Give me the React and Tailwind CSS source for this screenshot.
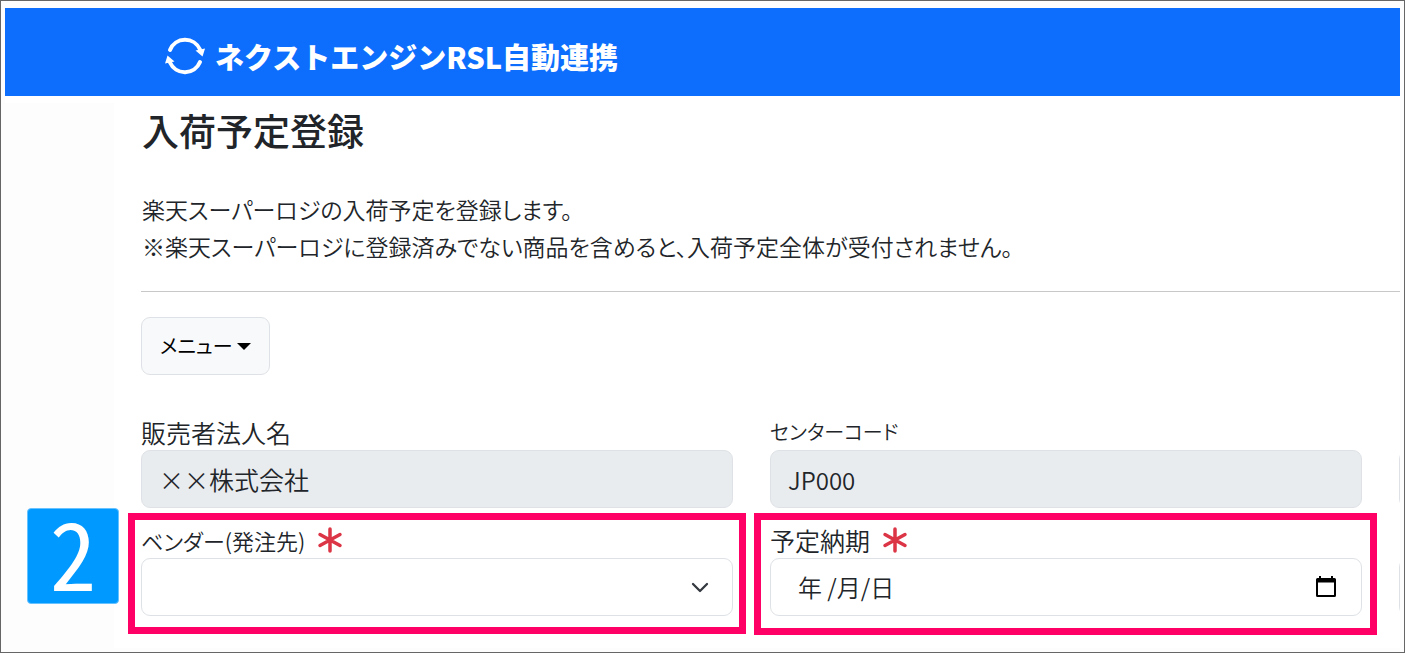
import React, { useState } from 'react';

function SyncLogo() {
  return (
    <svg viewBox="0 0 40 40" className="h-10 w-10 shrink-0" fill="none" aria-hidden="true">
      <path d="M5 14A16.300 16.300 0 0 1 35 13.500" stroke="#fff" strokeWidth="4" strokeLinecap="round" />
      <path d="M35 26A16.300 16.300 0 0 1 5 26.500" stroke="#fff" strokeWidth="4" strokeLinecap="round" />
      <path d="M30.500 14.500 40 12.500 37.500 20.500Z" fill="#fff" />
      <path d="M9.500 25.500 0 27.500 2.500 19.500Z" fill="#fff" />
    </svg>
  );
}

function Asterisk() {
  return (
    <svg viewBox="0 0 26 26" className="h-[26px] w-[26px]" aria-label="必須" role="img">
      <path d="M13 2V24M3 7.500 23 18.500M23 7.500 3 18.500" stroke="#dc3545" strokeWidth="3.500" strokeLinecap="round" />
    </svg>
  );
}

function CalendarIcon() {
  return (
    <svg viewBox="0 0 20 22" className="h-[22px] w-5" aria-hidden="true">
      <path
        fillRule="evenodd"
        fill="#000"
        d="M3 0h2v2h10V0h2v2h1.500a1.500 1.500 0 0 1 1.500 1.500v16a1.500 1.500 0 0 1-1.500 1.500h-17A1.500 1.500 0 0 1 0 19.500v-16A1.500 1.500 0 0 1 1.500 2H3zM2 6.500V19h16V6.500z"
      />
    </svg>
  );
}

function Label({ htmlFor, required, className = 'text-[25px]', children }) {
  return (
    <label htmlFor={htmlFor} className={`flex h-9 items-center gap-3 leading-8 whitespace-nowrap ${className}`}>
      {children}
      {required && <Asterisk />}
    </label>
  );
}

// Left edge of the next column, cut off by the viewport
function NextColumn() {
  return (
    <div className="overflow-hidden pt-9">
      <div className="h-[58px] w-16 rounded-[9px] border border-[#dee2e6]"></div>
    </div>
  );
}

function App() {
  const [vendor, setVendor] = useState('');
  const [dueDate, setDueDate] = useState('年 /月/日');

  return (
    <div className="flex min-h-screen flex-col overflow-hidden border border-[#666666] bg-[#fdfdfd] px-1 pt-[7px] pb-1 font-['Noto_Sans_CJK_JP',sans-serif] text-2xl font-[350] text-[#212529] [font-feature-settings:'palt']">
      {/* Header */}
      <header className="flex h-[88px] items-center bg-[#0d6efd] pt-2 pl-40">
        <a href="#" className="flex items-center gap-[10px] text-[29px] leading-9 font-black text-white [font-feature-settings:normal]">
          <SyncLogo />
          <span>ネクストエンジンRSL自動連携</span>
        </a>
      </header>

      <div className="flex flex-1 bg-white">
        <aside className="mt-[7px] w-[109px] shrink-0 bg-[#fdfdfd]"></aside>

        <main className="min-w-0 flex-1 pt-3 pl-7">
          <h1 className="text-[37px] leading-[45px] font-medium">入荷予定登録</h1>

          <p className="mt-[38px] text-[23px] leading-[37px]">
            楽天スーパーロジの入荷予定を登録します。
            <br />
            ※楽天スーパーロジに登録済みでない商品を含めると、入荷予定全体が受付されません。
          </p>

          <hr className="mt-[26px] -ml-px border-[#c7c8c9]" />

          <button
            type="button"
            className="mt-[25px] -ml-px flex h-[58px] items-center gap-1 rounded-[9px] border border-[#dee2e6] bg-[#f8f9fa] px-[18px] text-[20px] font-normal text-black"
          >
            メニュー
            <svg viewBox="0 0 14 7" className="h-[7px] w-[14px]" aria-hidden="true">
              <path d="M0 0h14L7 7z" />
            </svg>
          </button>

          <form className="mt-[39px] -ml-px grid grid-cols-[minmax(0,1fr)_minmax(0,1fr)_1px] gap-x-[37px] gap-y-[14px]">
            <div>
              <Label htmlFor="company">販売者法人名</Label>
              <input
                id="company"
                readOnly
                value="××株式会社"
                className="h-[58px] w-full rounded-[9px] border border-[#dee2e6] bg-[#e9ecef] px-[17px] text-[25px] outline-none"
              />
            </div>
            <div>
              <Label htmlFor="center" className="text-[20px]">センターコード</Label>
              <input
                id="center"
                readOnly
                value="JP000"
                className="h-[58px] w-full rounded-[9px] border border-[#dee2e6] bg-[#e9ecef] px-[17px] outline-none"
              />
            </div>
            <NextColumn />

            <div className="relative">
              <Label htmlFor="vendor" required className="text-[22px]">ベンダー(発注先)</Label>
              <div className="relative">
                <select
                  id="vendor"
                  value={vendor}
                  onChange={(e) => setVendor(e.target.value)}
                  className="block h-[58px] w-full appearance-none rounded-[9px] border border-[#dee2e6] bg-white px-[17px] outline-none"
                >
                  <option value=""></option>
                </select>
                <svg viewBox="0 0 18 12" className="pointer-events-none absolute top-6 right-6 h-3 w-[18px]" fill="none" aria-hidden="true">
                  <path d="M2 2l7 7 7-7" stroke="#343a40" strokeWidth="2.300" strokeLinecap="round" strokeLinejoin="round" />
                </svg>
              </div>
              <div className="pointer-events-none absolute -inset-x-[13px] -top-[9px] -bottom-[18px] border-[7px] border-[#ff0066]"></div>
              <div className="absolute -top-[14px] -left-[114px] flex h-24 w-[92px] items-center justify-center rounded border border-[#66c2ff] bg-[#0099ff] pb-3 text-[93px] leading-none font-normal text-white [font-feature-settings:'hwid']">
                2
              </div>
            </div>

            <div className="relative">
              <Label htmlFor="dueDate" required>予定納期</Label>
              <div className="flex h-[58px] items-center rounded-[9px] border border-[#dee2e6] bg-white pr-[25px] pl-[27px]">
                <input
                  id="dueDate"
                  type="text"
                  value={dueDate}
                  onChange={(e) => setDueDate(e.target.value)}
                  className="min-w-0 flex-1 outline-none"
                />
                <button type="button" aria-label="カレンダー">
                  <CalendarIcon />
                </button>
              </div>
              <div className="pointer-events-none absolute -right-[15px] -left-4 -top-[9px] -bottom-[19px] border-[7px] border-[#ff0066]"></div>
            </div>
            <NextColumn />
          </form>
        </main>
      </div>
    </div>
  );
}

export default App;
